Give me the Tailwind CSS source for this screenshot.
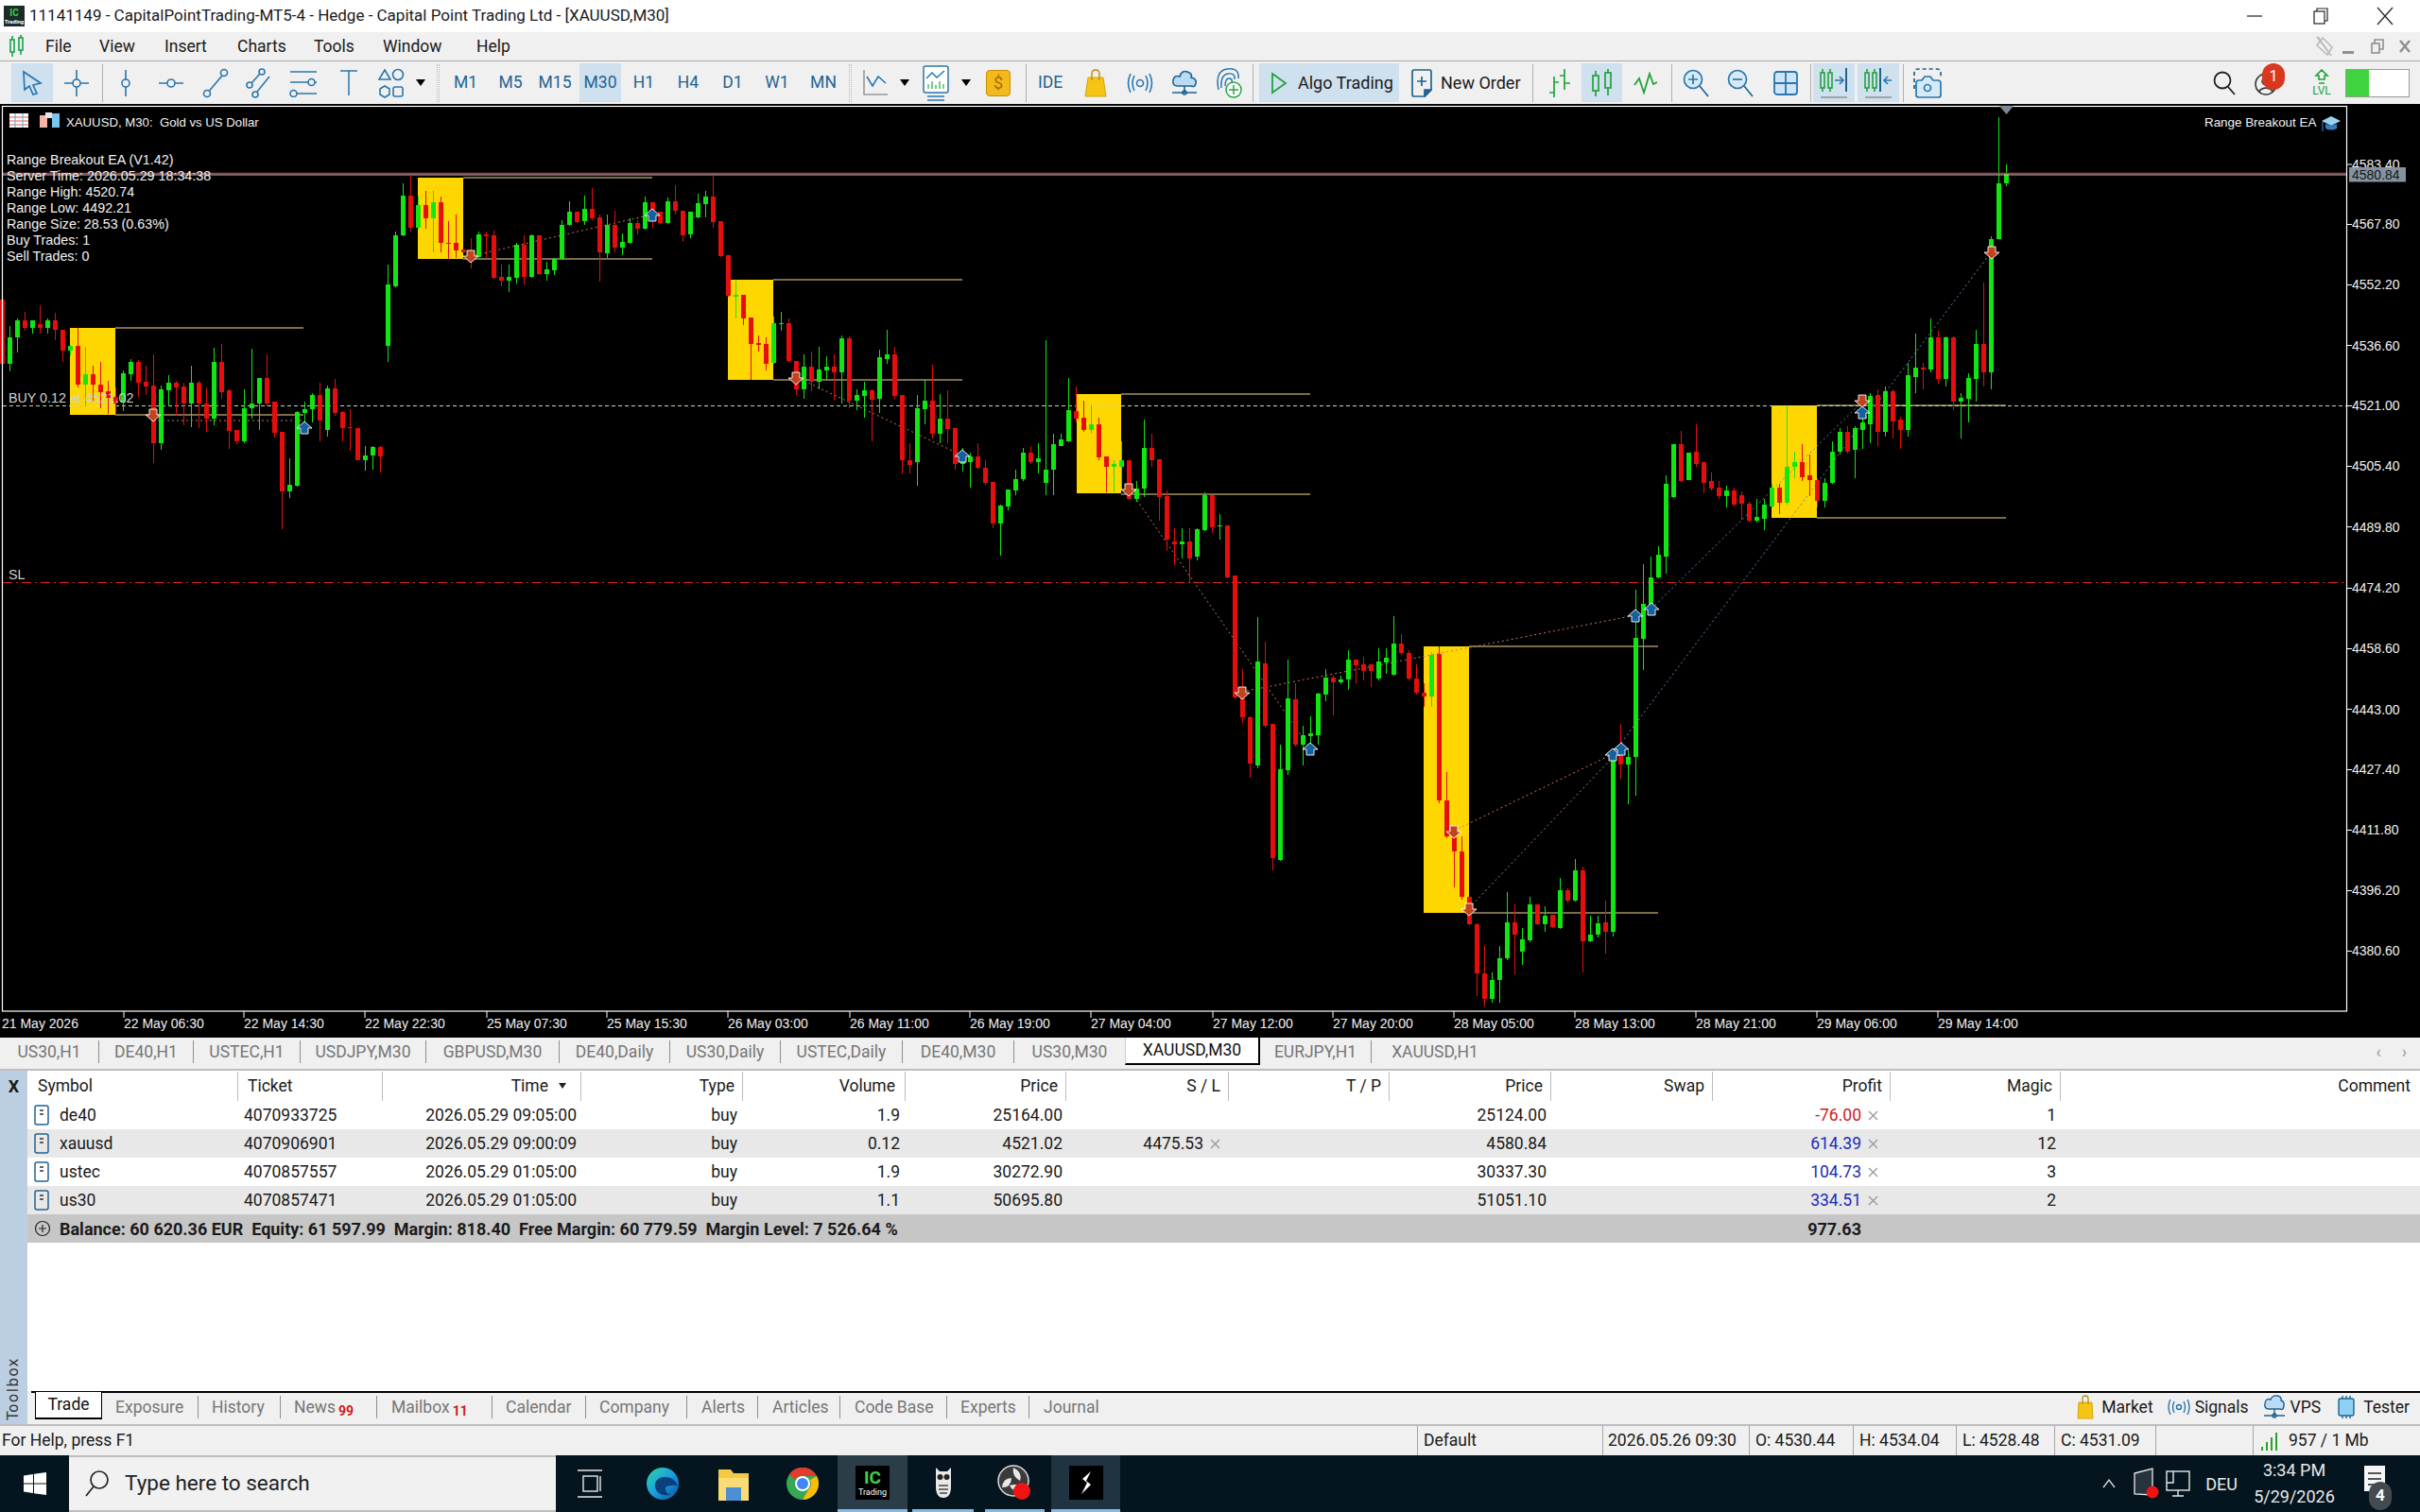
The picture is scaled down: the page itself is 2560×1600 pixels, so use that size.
<!doctype html>
<html lang="en">
<head>
<meta charset="utf-8">
<title>MT5</title>
<script src="https://cdn.jsdelivr.net/npm/@tailwindcss/browser@4"></script>
</head>
<body class="m-0">
<div class="w-[2560px] h-[1600px] overflow-hidden flex flex-col bg-white font-['Roboto',sans-serif] text-[17.5px] text-[#1a1a1a]">

<!-- title bar -->
<div class="h-[34px] shrink-0 flex items-center bg-white">
  <div class="w-[22px] h-[22px] ml-[4px] mr-[5px] bg-[#1c2b26] flex flex-col items-center justify-center text-[#36d04a] text-[10px] font-bold leading-[11px]">IC<span class="text-white text-[6px] leading-[7px]">Trading</span></div>
  <span class="text-[17px]">11141149 - CapitalPointTrading-MT5-4 - Hedge - Capital Point Trading Ltd - [XAUUSD,M30]</span>
  <div class="ml-auto flex items-center">
    <svg class="w-[20px] h-[20px] mr-[50px]" viewBox="0 0 20 20" fill="none" stroke="#222" stroke-width="1.2"><path d="M2 10H18"/></svg>
    <svg class="w-[20px] h-[20px] mr-[48px]" viewBox="0 0 20 20" fill="none" stroke="#222" stroke-width="1.2"><rect x="3" y="5" width="11" height="13"/><path d="M6 5V2H17V15H14"/></svg>
    <svg class="w-[20px] h-[20px] mr-[27px]" viewBox="0 0 20 20" fill="none" stroke="#222" stroke-width="1.2"><path d="M2 1L18 19M18 1L2 19"/></svg>
  </div>
</div>

<!-- menu bar -->
<div class="h-[31px] shrink-0 flex items-center bg-[#f0f0f0] border-b border-[#a9a9a9]">
  <svg class="w-[18px] h-[26px] ml-[9px]" viewBox="0 0 18 26" fill="none" stroke="#16a34a" stroke-width="1.6"><rect x="2" y="6" width="4" height="13"/><path d="M4 2V6M4 19V24"/><rect x="11" y="4" width="4" height="13"/><path d="M13 1V4M13 17V22"/></svg>
  <div class="w-[57px] pl-[21px]">File</div>
  <div class="w-[69px] pl-[21px]">View</div>
  <div class="w-[77px] pl-[21px]">Insert</div>
  <div class="w-[81px] pl-[21px]">Charts</div>
  <div class="w-[73px] pl-[21px]">Tools</div>
  <div class="w-[99px] pl-[21px]">Window</div>
  <div class="pl-[21px]">Help</div>
  <div class="ml-auto flex items-center">
    <svg class="w-[22px] h-[26px] mr-[8px]" viewBox="0 0 22 26" fill="none" stroke="#b9b9b9" stroke-width="1.5"><path d="M4 3L18 23M9 4L3 12L14 22L19 14ZM3 3L18 23"/></svg>
    <div class="w-[12px] h-[3px] bg-[#8f8f8f] mt-[12px] mr-[18px]"></div>
    <svg class="w-[14px] h-[16px] mr-[16px]" viewBox="0 0 14 16" fill="none" stroke="#8f8f8f" stroke-width="1.6"><rect x="1" y="5" width="8" height="10"/><path d="M4 5V1H13V11H9"/></svg>
    <svg class="w-[12px] h-[14px] mr-[10px]" viewBox="0 0 12 14" fill="none" stroke="#8f8f8f" stroke-width="2.4"><path d="M1 1L11 13M11 1L1 13"/></svg>
  </div>
</div>

<!-- toolbar -->
<div class="h-[45px] shrink-0 flex items-center bg-[#f0f0f0] text-[#1f6391] text-[17.5px] pl-[12px]">
  <div class="w-[44px] h-[41px] bg-[#cfe0ef] flex items-center justify-center"><svg class="w-[24px] h-[28px]" viewBox="0 0 24 28" fill="none" stroke="#2a76ad" stroke-width="1.7"><path d="M3 2L21 14L13 16L17 25L13 26L9 17L4 21Z"/></svg></div>
  <div class="w-[50px] flex justify-center"><svg class="w-[28px] h-[30px]" viewBox="0 0 28 30" fill="none" stroke="#2a76ad" stroke-width="1.6"><path d="M14 1V11M14 19V29M1 15H10M18 15H27"/><circle cx="14" cy="15" r="4"/></svg></div>
  <div class="w-[4px] h-[40px] flex justify-center"><div class="w-px h-full bg-[#b0b0b0]"></div></div>
  <div class="w-[46px] flex justify-center"><svg class="w-[16px] h-[30px]" viewBox="0 0 16 30" fill="none" stroke="#2a76ad" stroke-width="1.6"><path d="M8 1V11M8 19V29"/><circle cx="8" cy="15" r="4"/></svg></div>
  <div class="w-[50px] flex justify-center"><svg class="w-[28px] h-[14px]" viewBox="0 0 28 14" fill="none" stroke="#2a76ad" stroke-width="1.6"><path d="M1 7H10M18 7H27"/><circle cx="14" cy="7" r="4"/></svg></div>
  <div class="w-[44px] flex justify-center"><svg class="w-[30px] h-[32px]" viewBox="0 0 30 32" fill="none" stroke="#2a76ad" stroke-width="1.6"><circle cx="6" cy="27" r="3.5"/><circle cx="24" cy="5" r="3.5"/><path d="M8.5 24L22 8"/></svg></div>
  <div class="w-[48px] flex justify-center"><svg class="w-[30px] h-[32px]" viewBox="0 0 30 32" fill="none" stroke="#2a76ad" stroke-width="1.6"><circle cx="5" cy="18" r="3"/><circle cx="18" cy="4" r="3"/><path d="M7 16L16 6"/><circle cx="11" cy="28" r="3"/><path d="M13 25L26 9"/></svg></div>
  <div class="w-[46px] flex justify-center"><svg class="w-[30px] h-[30px]" viewBox="0 0 30 30" fill="none" stroke="#2a76ad" stroke-width="1.6"><path d="M1 3H29M1 14H20M27 14H29M8 26H29"/><circle cx="23.5" cy="14" r="3.5"/><circle cx="4.5" cy="26" r="3.5"/></svg></div>
  <div class="w-[50px] flex justify-center"><svg class="w-[20px] h-[30px]" viewBox="0 0 20 30" fill="none" stroke="#2a76ad" stroke-width="1.5"><path d="M1 2H19M10 2V28"/></svg></div>
  <div class="w-[40px] flex justify-center"><svg class="w-[28px] h-[32px]" viewBox="0 0 28 32" fill="none" stroke="#2a76ad" stroke-width="1.6"><path d="M7 2L13 12H1Z"/><circle cx="21" cy="7" r="5.5"/><path d="M7 19L12 22V28L7 31L2 28V22Z"/><rect x="16" y="20" width="10" height="10" rx="2"/></svg></div>
  <div class="w-[22px] flex justify-center"><div class="w-0 h-0 border-x-[5px] border-x-transparent border-t-[7px] border-t-black"></div></div>
  <div class="w-[14px] h-[40px] flex justify-center"><div class="w-[3px] h-full border-x border-dotted border-[#bbb]"></div></div>
  <div class="w-[45px] text-center">M1</div>
  <div class="w-[50px] text-center">M5</div>
  <div class="w-[44px] text-center">M15</div>
  <div class="w-[4px]"></div>
  <div class="w-[44px] h-[41px] bg-[#cfe0ef] flex items-center justify-center">M30</div>
  <div class="w-[48px] text-center">H1</div>
  <div class="w-[46px] text-center">H4</div>
  <div class="w-[48px] text-center">D1</div>
  <div class="w-[46px] text-center">W1</div>
  <div class="w-[52px] text-center">MN</div>
  <div class="w-[5px] h-[40px] flex justify-center"><div class="w-[3px] h-full border-x border-dotted border-[#bbb]"></div></div>
  <div class="w-[48px] flex justify-center"><svg class="w-[28px] h-[30px]" viewBox="0 0 28 30" fill="none" stroke="#2a76ad" stroke-width="1.6"><path d="M2 1V27H27" stroke="#9a9a9a"/><path d="M5 8L11 18L17 8L25 15"/></svg></div>
  <div class="w-[14px] flex justify-center"><div class="w-0 h-0 border-x-[5px] border-x-transparent border-t-[7px] border-t-black"></div></div>
  <div class="w-[51px] flex justify-center"><svg class="w-[30px] h-[38px]" viewBox="0 0 30 38" fill="none" stroke="#2a76ad" stroke-width="1.5"><rect x="2" y="1" width="26" height="28" rx="2" fill="#fff"/><path d="M5 14L11 8L16 13L24 6" stroke="#2a76ad"/><path d="M7 25V20M11 25V17M15 25V21M19 25V17M23 25V20" stroke="#27a745" stroke-width="1.2"/><path d="M6 33H24M6 37H24"/></svg></div>
  <div class="w-[14px] flex justify-center"><div class="w-0 h-0 border-x-[5px] border-x-transparent border-t-[7px] border-t-black"></div></div>
  <div class="w-[54px] flex justify-center"><div class="w-[26px] h-[28px] rounded-[4px] bg-[#f4b91a] border border-[#c98f05] flex items-center justify-center text-[#a8700a] text-[18px]">$</div></div>
  <div class="w-[4px] h-[40px] flex justify-center"><div class="w-px h-full bg-[#b0b0b0]"></div></div>
  <div class="w-[48px] text-center">IDE</div>
  <div class="w-[48px] flex justify-center"><svg class="w-[24px] h-[30px]" viewBox="0 0 24 30"><path d="M4 9H20L23 29H1Z" fill="#f6c514" stroke="#d8a40a"/><path d="M8 12V5Q8 1 12 1T16 5V12" fill="none" stroke="#b98d0c" stroke-width="1.4"/></svg></div>
  <div class="w-[46px] flex justify-center"><svg class="w-[28px] h-[24px]" viewBox="0 0 28 24" fill="none" stroke="#2a76ad" stroke-width="1.6"><circle cx="14" cy="12" r="3.5"/><path d="M8 4Q4 12 8 20M20 4Q24 12 20 20M4 2Q-1 12 4 22M24 2Q29 12 24 22"/></svg></div>
  <div class="w-[48px] flex justify-center"><svg class="w-[28px] h-[30px]" viewBox="0 0 28 30" fill="none" stroke="#1f6391" stroke-width="1.6"><path d="M7 18Q1 18 2 12T9 8Q11 1 17 3T21 9Q27 10 26 15T21 18Z" fill="#b8dcf5"/><path d="M14 18V25M1 25H27" /><circle cx="14" cy="25" r="2"/></svg></div>
  <div class="w-[46px] flex justify-center"><svg class="w-[28px] h-[34px]" viewBox="0 0 28 34" fill="none" stroke="#2a76ad" stroke-width="1.5"><path d="M3 24Q-1 4 12 2T24 12M6 22Q5 8 13 7T20 13M10 20Q10 12 14 12T17 16"/><circle cx="19" cy="24" r="8" fill="#fff" stroke="#27a745"/><path d="M19 19V29M14 24H24" stroke="#27a745"/></svg></div>
  <div class="w-[4px] h-[40px] flex justify-center"><div class="w-px h-full bg-[#b0b0b0]"></div></div>
  <div class="w-[5px]"></div>
  <div class="w-[148px] h-[41px] bg-[#cfe0ef] flex items-center text-[#1a1a1a] text-[18px] whitespace-nowrap"><svg class="w-[18px] h-[24px] ml-[12px] mr-[11px]" viewBox="0 0 18 24" fill="none" stroke="#22a23c" stroke-width="1.8"><path d="M2 2L16 12L2 22Z"/></svg>Algo Trading</div>
  <div class="w-[138px] flex items-center text-[#1a1a1a] text-[18px] whitespace-nowrap"><svg class="w-[22px] h-[30px] ml-[13px] mr-[9px]" viewBox="0 0 22 30" fill="none" stroke="#1f6391" stroke-width="1.7"><path d="M3 1H19Q21 1 21 3V22L14 29H3Q1 29 1 27V3Q1 1 3 1Z"/><path d="M11 8V18M6 13H16"/><path d="M14 29V22H21Z" fill="#1f6391"/></svg>New Order</div>
  <div class="w-[6px] h-[40px] flex justify-center"><div class="w-px h-full bg-[#b0b0b0]"></div></div>
  <div class="w-[49px] flex justify-center"><svg class="w-[26px] h-[32px]" viewBox="0 0 26 32" fill="none" stroke="#22a23c" stroke-width="1.7"><path d="M8 9V31M3 26H8M8 15H13M19 1V23M14 8H19M19 16H25"/></svg></div>
  <div class="w-[43px] h-[41px] bg-[#cfe0ef] flex items-center justify-center"><svg class="w-[24px] h-[32px]" viewBox="0 0 24 32" fill="none" stroke="#22a23c" stroke-width="1.7"><rect x="2" y="8" width="6" height="16"/><path d="M5 3V8M5 24V30"/><rect x="15" y="5" width="6" height="16"/><path d="M18 1V5M18 21V29"/></svg></div>
  <div class="w-[50px] flex justify-center"><svg class="w-[26px] h-[24px]" viewBox="0 0 26 24" fill="none" stroke="#22a23c" stroke-width="1.8"><path d="M1 14L6 7L11 22L17 2L21 13L25 11"/></svg></div>
  <div class="w-[4px] h-[40px] flex justify-center"><div class="w-px h-full bg-[#b0b0b0]"></div></div>
  <div class="w-[48px] flex justify-center"><svg class="w-[28px] h-[30px]" viewBox="0 0 28 30" fill="none" stroke="#2a76ad" stroke-width="1.7"><circle cx="11" cy="11" r="9.5" fill="#d6e9f7"/><path d="M11 6V16M6 11H16"/><path d="M18 18L27 29" stroke="#1f6391"/></svg></div>
  <div class="w-[46px] flex justify-center"><svg class="w-[28px] h-[30px]" viewBox="0 0 28 30" fill="none" stroke="#2a76ad" stroke-width="1.7"><circle cx="11" cy="11" r="9.5" fill="#d6e9f7"/><path d="M6 11H16"/><path d="M18 18L27 29" stroke="#1f6391"/></svg></div>
  <div class="w-[49px] flex justify-center"><svg class="w-[26px] h-[26px]" viewBox="0 0 26 26" fill="#cfe4f6" stroke="#2a76ad" stroke-width="1.8"><rect x="1" y="1" width="24" height="24" rx="3"/><path d="M13 1V25M1 13H25"/></svg></div>
  <div class="w-[4px] h-[40px] flex justify-center"><div class="w-px h-full bg-[#b0b0b0]"></div></div>
  <div class="w-[1px]"></div>
  <div class="w-[44px] h-[41px] bg-[#cfe0ef] flex items-center justify-center"><svg class="w-[30px] h-[34px]" viewBox="0 0 30 34" fill="none" stroke-width="1.6"><g stroke="#22a23c"><rect x="1" y="6" width="4" height="16"/><path d="M3 2V6M3 22V26"/><rect x="9" y="6" width="4" height="16"/><path d="M11 2V6M11 22V26"/></g><path d="M16 14H24M21 10L25 14L21 18" stroke="#2a76ad"/><path d="M28 1V26" stroke="#1f6391" stroke-width="2"/><path d="M1 32H29" stroke="#a3a3a3" stroke-width="2"/></svg></div>
  <div class="w-[3px]"></div>
  <div class="w-[44px] h-[41px] bg-[#cfe0ef] flex items-center justify-center"><svg class="w-[30px] h-[34px]" viewBox="0 0 30 34" fill="none" stroke-width="1.6"><g stroke="#22a23c"><rect x="1" y="6" width="4" height="16"/><path d="M3 2V6M3 22V26"/><rect x="9" y="6" width="4" height="16"/><path d="M11 2V6M11 22V26"/></g><path d="M17 1V26" stroke="#1f6391" stroke-width="2"/><path d="M29 14H21M25 10L21 14L25 18" stroke="#2a76ad"/><path d="M1 32H29" stroke="#a3a3a3" stroke-width="2"/></svg></div>
  <div class="w-[4px] h-[40px] flex justify-center ml-[2px]"><div class="w-px h-full bg-[#b0b0b0]"></div></div>
  <div class="w-[48px] flex justify-center"><svg class="w-[30px] h-[32px]" viewBox="0 0 30 32" fill="none" stroke="#2a76ad" stroke-width="1.7"><path d="M1 22V5Q1 1 5 1H25Q29 1 29 5V9" stroke-dasharray="4 3" stroke="#1f6391"/><path d="M9 13L12 9H18L21 13H26Q29 13 29 16V29Q29 31 26 31H6Q3 31 3 29V16Q3 13 6 13Z" fill="#d6e9f7"/><circle cx="15" cy="21" r="3.5"/></svg></div>
  <div class="flex-1"></div>
  <svg class="w-[24px] h-[26px] mr-[20px]" viewBox="0 0 24 26" fill="none" stroke="#222" stroke-width="1.8"><circle cx="10" cy="10" r="8.5"/><path d="M16 17L23 25"/></svg>
  <div class="relative w-[26px] h-[26px] mr-[34px]">
    <svg class="w-[26px] h-[28px]" viewBox="0 0 26 28" fill="none" stroke="#333" stroke-width="1.5"><circle cx="12" cy="14" r="11"/><circle cx="12" cy="11" r="4"/><path d="M4 22Q12 14 20 22"/></svg>
    <div class="absolute -top-[8px] left-[8px] w-[24px] h-[28px] rounded-full bg-[#d8381e] text-white text-[16px] flex items-center justify-center">1</div>
  </div>
  <div class="flex flex-col items-center w-[22px] mr-[14px] text-[#22a23c] text-[12px] leading-[13px]">
    <svg class="w-[16px] h-[17px]" viewBox="0 0 16 17" fill="none" stroke="#22a23c" stroke-width="1.6"><path d="M8 1L2 7H5V11H11V7H14ZM5 15H11"/></svg>LVL
  </div>
  <div class="w-[68px] h-[30px] bg-white border border-[#9a9a9a] mr-[11px]"><div class="w-[24px] h-full bg-[#3fd43f]"></div></div>
</div>

<!-- chart -->
<div class="h-[988px] shrink-0 bg-black">
<svg class="block w-[2560px] h-[988px]" viewBox="0 110 2560 988">
  <!-- range boxes -->
  <g fill="#ffd700">
    <rect x="74" y="347" width="48" height="92"/>
    <rect x="442" y="188" width="48" height="86"/>
    <rect x="770" y="296" width="48" height="106"/>
    <rect x="1139" y="417" width="47" height="105"/>
    <rect x="1506" y="684" width="48" height="282"/>
    <rect x="1874" y="429" width="48" height="119"/>
  </g>
  <path fill="none" stroke="#f5d98f" stroke-width="1.2" d="M122 347H321M122 439H321M490 188H690M490 274H690M818 296H1018M818 402H1018M1186 417H1386M1186 523H1386M1554 684H1754M1554 966H1754M1922 429H2122M1922 548H2122"/>
  <!-- order lines -->
  <path stroke="#b9e0a8" stroke-width="1" stroke-dasharray="4 3" d="M3 429.5H2483"/>
  <path stroke="#e02020" stroke-width="1.2" stroke-dasharray="10 4 2 4" d="M3 616.5H2483"/>
  <!-- trade lines -->
  <g fill="none" stroke-width="1" stroke-dasharray="2 3">
    <g stroke="#c9785a">
      <path d="M162 445H322M498 271L690 227M842 399L1018 482M1194 517L1386 792M1314 732L1730 651M1538 879L1706 798M1554 961L1715 792"/>
    </g>
    <g stroke="#5a86c0"><path d="M1747 644L1970 425M1706 798L2107 266"/></g>
  </g>
  <!-- wicks & bodies -->
  <g fill="none" shape-rendering="crispEdges">
    <path stroke="#12e612" stroke-width="1" d="M10 345V393M18 337V373M34 339V353M50 337V353M74 365V377M90 367V430M130 392V435M138 380V403M170 408V476M178 397V430M202 387V452M226 368V450M258 412V469M266 369V443M274 400V455M306 485V527M314 435V515M322 425V447M330 416V447M346 408V462M386 472V498M394 472V497M410 280V383M418 245V304M426 194V250M442 207V243M458 202V267M506 245V273M538 280V309M546 257V300M562 248V294M578 277V297M586 273V291M594 233V275M602 213V239M618 207V238M642 227V273M658 247V270M666 231V258M682 208V243M706 209V237M730 224V252M738 205V231M746 202V230M778 297V337M818 335V385M826 330V350M850 375V422M866 367V412M874 377V402M890 355V427M906 412V434M914 404V442M930 370V437M938 349V385M970 418V514M978 402V449M994 417V469M1018 474V499M1026 479V516M1058 534V588M1066 518V540M1074 497V524M1082 474V509M1098 469V501M1106 360V524M1114 459V524M1122 459V472M1130 400V468M1154 429V459M1178 487V521M1186 467V519M1202 509V531M1210 444V526M1250 559V591M1266 559V593M1274 521V562M1290 544V571M1330 653V813M1354 788V911M1362 698V820M1378 768V810M1386 758V797M1394 733V788M1402 708V742M1418 715V724M1426 688V730M1458 686V720M1466 686V713M1474 652V715M1514 690V748M1578 1029V1061M1586 1001V1061M1594 944V1016M1610 982V1021M1618 949V997M1634 959V986M1650 929V983M1666 909V954M1682 969V997M1690 969V992M1706 794V991M1722 794V851M1730 624V842M1738 597V709M1746 589V644M1754 578V612M1762 503V607M1770 470V527M1786 479V508M1826 514V537M1858 528V553M1866 528V561M1874 512V537M1890 430V534M1898 478V506M1930 506V537M1938 467V512M1946 453V481M1962 451V506M1970 425V475M1978 416V469M1994 409V462M2018 384V462M2026 353V416M2042 337V394M2058 356V409M2074 416V464M2082 395V447M2090 349V425M2106 250V412M2114 124V253M2122 174V197"/>
    <path stroke="#12e612" stroke-width="5" d="M10 357V385M18 339V357M34 339V347M50 339V347M74 366V371M90 396V407M130 395V426M138 383V396M170 412V469M178 405V413M202 405V427M226 383V443M258 432V467M266 427V432M274 400V427M306 513V520M314 436V514M322 433V437M330 418V433M346 411V455M386 482V487M394 473V482M410 301V366M418 249V303M426 207V249M442 217V241M458 214V231M506 248V272M538 293V297M546 259V294M562 249V293M578 285V290M586 274V286M594 238V274M602 224V238M618 221V234M642 238V268M658 256V262M666 236V257M682 214V242M706 213V236M730 224V248M738 215V230M746 208V216M778 312V314M818 342V384M826 342V343M850 388V412M866 391V404M874 388V392M890 358V394M906 418V424M914 413V419M930 378V422M938 375V380M970 432V489M978 424V433M994 443V459M1018 488V491M1026 483V489M1058 535V554M1066 518V536M1074 507V519M1082 479V507M1098 485V489M1106 497V511M1114 470V497M1122 465V472M1130 434V467M1154 449V455M1178 491V494M1186 487V494M1202 517V528M1210 474V517M1250 573V576M1266 560V589M1274 524V561M1290 556V557M1330 700V810M1354 814V910M1362 739V815M1378 778V788M1386 776V779M1394 734V778M1402 717V735M1418 719V722M1426 698V719M1458 700V718M1466 696V701M1474 681V714M1514 693V737M1578 1037V1057M1586 1014V1037M1594 976V1014M1610 994V1007M1618 957V995M1634 969V978M1650 942V982M1666 921V953M1682 989V996M1690 977V989M1706 800V986M1722 801V809M1730 675V801M1738 639V676M1746 611V641M1754 587V611M1762 512V589M1770 470V526M1786 479V508M1826 519V525M1858 547V551M1866 534V549M1874 516V536M1890 494V532M1898 489V494M1930 511V530M1938 478V511M1946 457V478M1962 453V476M1970 447V455M1978 419V449M1994 414V457M2018 397V455M2026 389V399M2042 357V391M2058 357V401M2074 421V425M2082 400V422M2090 364V401M2106 253V394M2114 194V253M2122 184V194"/>
    <path stroke="#e60d0d" stroke-width="1" d="M26 330V350M42 323V353M58 331V360M66 349V383M82 347V410M98 387V425M106 383V432M114 403V438M122 410V438M146 381V420M154 387V418M162 375V490M186 403V440M194 405V450M210 403V453M218 410V457M234 364V422M242 412V475M250 455V470M282 375V430M290 425V463M298 457V560M338 405V467M354 401V440M362 435V467M370 433V477M378 453V487M402 472V500M434 186V245M450 202V242M466 208V267M474 234V274M482 227V273M490 264V267M498 252V284M514 245V273M522 244V295M530 280V303M554 249V301M570 249V291M610 224V236M626 199V233M634 227V298M650 223V267M674 233V248M690 214V241M698 224V237M714 196V227M722 223V256M754 186V241M762 234V272M770 270V314M786 312V344M794 336V402M802 355V372M810 357V392M834 337V384M842 382V418M858 372V414M882 375V424M898 356V432M922 412V467M946 367V422M954 418V501M962 469V501M986 386V464M1002 413V469M1010 453V497M1034 469V497M1042 487V513M1050 510V559M1090 472V491M1138 409V447M1146 424V457M1162 442V487M1170 483V521M1194 487V529M1218 459V494M1226 486V551M1234 519V583M1242 559V598M1258 559V616M1282 524V564M1298 556V612M1306 609V740M1314 708V765M1322 758V823M1338 679V770M1346 766V921M1370 723V790M1410 715V757M1434 698V723M1442 695V720M1450 703V727M1482 671V693M1490 688V720M1498 703V735M1506 723V748M1522 684V850M1530 817V887M1538 882V939M1546 885V952M1554 949V979M1562 977V1054M1570 1001V1065M1602 957V1031M1626 957V979M1642 968V982M1658 940V955M1674 917V1029M1698 953V1009M1714 766V824M1778 456V510M1794 449V494M1802 489V522M1810 500V519M1818 509V528M1834 516V536M1842 520V550M1850 531V553M1882 512V544M1906 470V509M1914 481V525M1922 506V537M1954 451V480M1986 412V472M2002 412V464M2010 441V475M2034 384V412M2050 350V406M2066 356V434M2098 299V409"/>
    <path stroke="#e60d0d" stroke-width="5" d="M2 317V385M26 339V347M42 343V347M58 339V349M66 349V371M82 366V407M98 396V407M106 407V415M114 414V421M122 420V427M146 383V405M154 404V409M162 408V469M186 405V410M194 409V427M210 405V427M218 427V443M234 383V415M242 413V456M250 455V467M282 400V427M290 425V458M298 457V520M338 418V445M354 411V437M362 436V453M370 452V453M378 453V487M402 473V483M434 207V241M450 217V231M466 214V257M474 257V258M482 257V265M490 264V267M498 267V273M514 248V250M522 249V294M530 293V297M554 259V293M570 249V290M610 224V235M626 221V231M634 230V267M650 238V262M674 236V242M690 214V223M698 224V236M714 213V223M722 223V249M754 208V235M762 234V271M770 270V313M786 312V337M794 336V364M802 363V365M810 364V385M834 342V382M842 382V412M858 388V404M882 388V394M898 358V424M922 413V423M946 375V419M954 418V487M962 487V492M986 424V459M1002 443V454M1010 453V491M1034 483V495M1042 495V511M1050 510V554M1090 479V489M1138 435V443M1146 442V455M1162 449V484M1170 483V494M1194 487V528M1218 474V487M1226 486V526M1234 525V571M1242 573V576M1258 573V591M1282 524V558M1298 556V611M1306 609V738M1314 739V759M1322 759V808M1338 702V768M1346 766V908M1370 740V788M1410 717V722M1434 698V704M1442 703V710M1450 703V710M1482 681V691M1490 691V718M1498 718V733M1506 733V737M1522 692V847M1530 847V885M1538 886V901M1546 901V949M1554 949V978M1562 978V1030M1570 1030V1057M1602 976V989M1626 957V978M1642 968V981M1658 942V953M1674 921V996M1698 976V986M1714 799V809M1778 470V509M1794 478V491M1802 489V511M1810 509V517M1818 516V525M1834 519V534M1842 524V533M1850 533V551M1882 516V532M1906 489V505M1914 503V508M1922 508V530M1954 457V478M1986 418V457M2002 414V446M2010 444V455M2034 389V391M2050 357V401M2066 357V425M2098 364V394"/>
  </g>
  <!-- bid line and frame -->
  <path stroke="#b33a3a" stroke-width="1.5" d="M3 183.5H2483"/>
  <path stroke="#cdbcbc" stroke-width="1" d="M3 185H2483"/>
  <rect x="2.5" y="112.5" width="2480" height="957.5" fill="none" stroke="#fff" stroke-width="1.2"/>
  <path d="M2115 112H2130L2122.5 121Z" fill="#7d8a95"/>
  <!-- trade arrows -->
  <g stroke="#fff" stroke-width="0.9" fill="#c4431f">
    <path d="M158 433H166V439H170L162 446L154 439H158Z"/>
    <path d="M494 265H502V271H506L498 278L490 271H494Z"/>
    <path d="M838 394H846V400H850L842 407L834 400H838Z"/>
    <path d="M1190 512H1198V518H1202L1194 525L1186 518H1190Z"/>
    <path d="M1310 727H1318V733H1322L1314 740L1306 733H1310Z"/>
    <path d="M1534 874H1542V880H1546L1538 887L1530 880H1534Z"/>
    <path d="M1550 956H1558V962H1562L1554 969L1546 962H1550Z"/>
    <path d="M1966 418H1974V424H1978L1970 431L1962 424H1966Z"/>
    <path d="M2103 261H2111V267H2115L2107 274L2099 267H2103Z"/>
  </g>
  <g stroke="#fff" stroke-width="0.9" fill="#15609f">
    <path d="M322 446L330 453H326V459H318V453H314Z"/>
    <path d="M690 221L698 228H694V234H686V228H682Z"/>
    <path d="M1018 476L1026 483H1022V489H1014V483H1010Z"/>
    <path d="M1386 786L1394 793H1390V799H1382V793H1378Z"/>
    <path d="M1730 645L1738 652H1734V658H1726V652H1722Z"/>
    <path d="M1747 638L1755 645H1751V651H1743V645H1739Z"/>
    <path d="M1706 792L1714 799H1710V805H1702V799H1698Z"/>
    <path d="M1715 786L1723 793H1719V799H1711V793H1707Z"/>
    <path d="M1970 430L1978 437H1974V443H1966V437H1962Z"/>
  </g>
  <!-- chart icons -->
  <g fill="none" stroke-width="1">
    <rect x="10" y="120" width="20" height="15" fill="#fff"/>
    <path d="M10 124H30M10 128H30M10 132H30" stroke="#e65b4a"/>
    <path d="M16 120V135M24 120V135" stroke="#5aa4d8"/>
    <rect x="42" y="122" width="8" height="13" fill="#f6b4a8"/>
    <rect x="55" y="120" width="8" height="15" fill="#7cc4f0"/>
    <rect x="48" y="119" width="7" height="6" fill="#e6e6e6"/>
  </g>
  <path d="M2466 123L2476 128L2466 133L2456 128Z" fill="#9ad2f5"/>
  <path d="M2460 131V136Q2466 139 2472 136V131L2466 133Z" fill="#2f7fc0"/>
  <path d="M2457 129V139" stroke="#2f7fc0" stroke-width="1.2"/>
  <!-- texts -->
  <g font-family="'Liberation Sans',sans-serif" font-size="14.3" fill="#f2f2f2">
    <text x="70" y="134" font-size="13.2" xml:space="preserve">XAUUSD, M30:  Gold vs US Dollar</text>
    <text x="2332" y="134" font-size="13.4">Range Breakout EA</text>
    <text x="7" y="174">Range Breakout EA (V1.42)</text>
    <text x="7" y="191">Server Time: 2026.05.29 18:34:38</text>
    <text x="7" y="208">Range High: 4520.74</text>
    <text x="7" y="225">Range Low: 4492.21</text>
    <text x="7" y="242">Range Size: 28.53 (0.63%)</text>
    <text x="7" y="259">Buy Trades: 1</text>
    <text x="7" y="276">Sell Trades: 0</text>
    <text x="9" y="426" fill="#d0d0d0">BUY 0.12 at 4521.02</text>
    <text x="9" y="613" fill="#d0d0d0">SL</text>
  </g>
  <!-- price axis -->
  <path stroke="#fff" stroke-width="1" d="M2483 174H2488M2483 237.5H2488M2483 301.5H2488M2483 365.5H2488M2483 429.5H2488M2483 493.5H2488M2483 557.5H2488M2483 622.5H2488M2483 686.5H2488M2483 750.5H2488M2483 814.5H2488M2483 878.5H2488M2483 942.5H2488M2483 1006.5H2488M131 1070V1077M258 1070V1077M386 1070V1077M515 1070V1077M642 1070V1077M770 1070V1077M899 1070V1077M1026 1070V1077M1154 1070V1077M1283 1070V1077M1410 1070V1077M1538 1070V1077M1666 1070V1077M1794 1070V1077M1922 1070V1077M2050 1070V1077"/>
  <g font-family="'Liberation Sans',sans-serif" font-size="14" fill="#f2f2f2">
    <text x="2488" y="179">4583.40</text>
    <text x="2488" y="242">4567.80</text>
    <text x="2488" y="306">4552.20</text>
    <text x="2488" y="371">4536.60</text>
    <text x="2488" y="434">4521.00</text>
    <text x="2488" y="498">4505.40</text>
    <text x="2488" y="563">4489.80</text>
    <text x="2488" y="627">4474.20</text>
    <text x="2488" y="691">4458.60</text>
    <text x="2488" y="756">4443.00</text>
    <text x="2488" y="819">4427.40</text>
    <text x="2488" y="883">4411.80</text>
    <text x="2488" y="947">4396.20</text>
    <text x="2488" y="1011">4380.60</text>
    <text x="2" y="1088">21 May 2026</text>
    <text x="131" y="1088">22 May 06:30</text>
    <text x="258" y="1088">22 May 14:30</text>
    <text x="386" y="1088">22 May 22:30</text>
    <text x="515" y="1088">25 May 07:30</text>
    <text x="642" y="1088">25 May 15:30</text>
    <text x="770" y="1088">26 May 03:00</text>
    <text x="899" y="1088">26 May 11:00</text>
    <text x="1026" y="1088">26 May 19:00</text>
    <text x="1154" y="1088">27 May 04:00</text>
    <text x="1283" y="1088">27 May 12:00</text>
    <text x="1410" y="1088">27 May 20:00</text>
    <text x="1538" y="1088">28 May 05:00</text>
    <text x="1666" y="1088">28 May 13:00</text>
    <text x="1794" y="1088">28 May 21:00</text>
    <text x="1922" y="1088">29 May 06:00</text>
    <text x="2050" y="1088">29 May 14:00</text>
  </g>
  <rect x="2485" y="177" width="60" height="15.5" fill="#8593a1"/>
  <text x="2488" y="190" font-family="'Liberation Sans',sans-serif" font-size="14" fill="#161616">4580.84</text>
</svg>
</div>

<!-- chart tabs -->
<div class="h-[35px] shrink-0 flex items-start bg-[#f0f0f0] border-b-2 border-[#bdbdbd] text-[#767676] relative">
  <div class="w-[105px] h-[24px] mt-[3px] border-r border-[#8f8f8f] flex items-center justify-center">US30,H1</div>
  <div class="w-[100px] h-[24px] mt-[3px] border-r border-[#8f8f8f] flex items-center justify-center">DE40,H1</div>
  <div class="w-[113px] h-[24px] mt-[3px] border-r border-[#8f8f8f] flex items-center justify-center">USTEC,H1</div>
  <div class="w-[133px] h-[24px] mt-[3px] border-r border-[#8f8f8f] flex items-center justify-center">USDJPY,M30</div>
  <div class="w-[141px] h-[24px] mt-[3px] border-r border-[#8f8f8f] flex items-center justify-center">GBPUSD,M30</div>
  <div class="w-[117px] h-[24px] mt-[3px] border-r border-[#8f8f8f] flex items-center justify-center">DE40,Daily</div>
  <div class="w-[117px] h-[24px] mt-[3px] border-r border-[#8f8f8f] flex items-center justify-center">US30,Daily</div>
  <div class="w-[129px] h-[24px] mt-[3px] border-r border-[#8f8f8f] flex items-center justify-center">USTEC,Daily</div>
  <div class="w-[118px] h-[24px] mt-[3px] border-r border-[#8f8f8f] flex items-center justify-center">DE40,M30</div>
  <div class="w-[117px] h-[24px] mt-[3px]  flex items-center justify-center">US30,M30</div>
  <div class="w-[143px] h-[29px] bg-white border-l border-r-2 border-b-2 border-l-[#cfcfcf] border-r-black border-b-black flex items-center justify-center text-[#111]">XAUUSD,M30</div>
  <div class="w-[118px] h-[24px] mt-[3px] border-r border-[#8f8f8f] flex items-center justify-center">EURJPY,H1</div>
  <div class="w-[134px] h-[24px] mt-[3px] flex items-center justify-center">XAUUSD,H1</div>
  <div class="ml-auto mr-[14px] mt-[2px] flex gap-[22px] text-[#9a9a9a]"><span>‹</span><span>›</span></div>
</div>

<!-- toolbox -->
<div class="h-[374px] shrink-0 flex">
  <div class="w-[29px] shrink-0 bg-[#bccfe2] flex flex-col items-center">
    <div class="mt-[3px] font-bold text-[18px] text-[#1a1a1a]">X</div>
    <div class="mt-auto mb-[4px] [writing-mode:vertical-rl] rotate-180 text-[15px] tracking-[1.5px] font-['DejaVu_Sans',sans-serif] text-[#333]">Toolbox</div>
  </div>
  <div class="flex-1 flex flex-col min-w-0">
    <!-- header -->
    <div class="h-[32px] shrink-0 grid grid-cols-[223px_153px_210px_171px_172px_170px_172px_170px_171px_171px_188px_180px_380px] items-center bg-white">
      <div class="h-[31px] border-r border-[#bdbdbd] pl-[11px] leading-[31px]">Symbol</div>
      <div class="h-[31px] border-r border-[#bdbdbd] pl-[10px] leading-[31px]">Ticket</div>
      <div class="h-[31px] border-r border-[#bdbdbd] pr-[15px] flex items-center justify-end gap-[11px]">Time<span class="w-0 h-0 border-x-[4px] border-x-transparent border-t-[6px] border-t-[#222]"></span></div>
      <div class="h-[31px] border-r border-[#bdbdbd] pr-[8px] leading-[31px] text-right">Type</div>
      <div class="h-[31px] border-r border-[#bdbdbd] pr-[10px] leading-[31px] text-right">Volume</div>
      <div class="h-[31px] border-r border-[#bdbdbd] pr-[8px] leading-[31px] text-right">Price</div>
      <div class="h-[31px] border-r border-[#bdbdbd] pr-[8px] leading-[31px] text-right">S / L</div>
      <div class="h-[31px] border-r border-[#bdbdbd] pr-[8px] leading-[31px] text-right">T / P</div>
      <div class="h-[31px] border-r border-[#bdbdbd] pr-[8px] leading-[31px] text-right">Price</div>
      <div class="h-[31px] border-r border-[#bdbdbd] pr-[8px] leading-[31px] text-right">Swap</div>
      <div class="h-[31px] border-r border-[#bdbdbd] pr-[8px] leading-[31px] text-right">Profit</div>
      <div class="h-[31px] border-r border-[#bdbdbd] pr-[8px] leading-[31px] text-right">Magic</div>
      <div class="h-[31px] pr-[10px] leading-[31px] text-right">Comment</div>
    </div>
    <!-- rows -->
    <div class="h-[30px] shrink-0 grid grid-cols-[223px_153px_210px_171px_172px_170px_172px_170px_171px_171px_188px_180px_380px] items-center bg-white">
      <div class="flex items-center pl-[7px] gap-[11px]"><svg class="w-[16px] h-[22px]" viewBox="0 0 16 22" fill="none" stroke="#1f6391" stroke-width="1.5"><rect x="1" y="1" width="14" height="20" rx="2"/><path d="M6 6H10M6 10H10" stroke="#333"/></svg>de40</div>
      <div class="pl-[6px]">4070933725</div>
      <div class="pr-[5px] text-right">2026.05.29 09:05:00</div>
      <div class="pr-[6px] text-right">buy</div>
      <div class="pr-[6px] text-right">1.9</div>
      <div class="pr-[4px] text-right">25164.00</div>
      <div></div><div></div>
      <div class="pr-[5px] text-right">25124.00</div>
      <div></div>
      <div class="pr-[8px] flex items-center justify-end gap-[7px]"><span class="text-[#d01c1c]">-76.00</span><svg class="w-[11px] h-[11px] mr-[5px]" viewBox="0 0 11 11" stroke="#9a9a9a" stroke-width="1.4"><path d="M1 1L10 10M10 1L1 10"/></svg></div>
      <div class="pr-[5px] text-right">1</div>
      <div></div>
    </div>
    <div class="h-[30px] shrink-0 grid grid-cols-[223px_153px_210px_171px_172px_170px_172px_170px_171px_171px_188px_180px_380px] items-center bg-[#e8e8e8]">
      <div class="flex items-center pl-[7px] gap-[11px]"><svg class="w-[16px] h-[22px]" viewBox="0 0 16 22" fill="none" stroke="#1f6391" stroke-width="1.5"><rect x="1" y="1" width="14" height="20" rx="2"/><path d="M6 6H10M6 10H10" stroke="#333"/></svg>xauusd</div>
      <div class="pl-[6px]">4070906901</div>
      <div class="pr-[5px] text-right">2026.05.29 09:00:09</div>
      <div class="pr-[6px] text-right">buy</div>
      <div class="pr-[6px] text-right">0.12</div>
      <div class="pr-[4px] text-right">4521.02</div>
      <div class="flex items-center justify-end gap-[7px] pr-[9px]"><span>4475.53</span><svg class="w-[11px] h-[11px]" viewBox="0 0 11 11" stroke="#9a9a9a" stroke-width="1.4"><path d="M1 1L10 10M10 1L1 10"/></svg></div>
      <div></div>
      <div class="pr-[5px] text-right">4580.84</div>
      <div></div>
      <div class="pr-[8px] flex items-center justify-end gap-[7px]"><span class="text-[#1c2bb8]">614.39</span><svg class="w-[11px] h-[11px] mr-[5px]" viewBox="0 0 11 11" stroke="#9a9a9a" stroke-width="1.4"><path d="M1 1L10 10M10 1L1 10"/></svg></div>
      <div class="pr-[5px] text-right">12</div>
      <div></div>
    </div>
    <div class="h-[30px] shrink-0 grid grid-cols-[223px_153px_210px_171px_172px_170px_172px_170px_171px_171px_188px_180px_380px] items-center bg-white">
      <div class="flex items-center pl-[7px] gap-[11px]"><svg class="w-[16px] h-[22px]" viewBox="0 0 16 22" fill="none" stroke="#1f6391" stroke-width="1.5"><rect x="1" y="1" width="14" height="20" rx="2"/><path d="M6 6H10M6 10H10" stroke="#333"/></svg>ustec</div>
      <div class="pl-[6px]">4070857557</div>
      <div class="pr-[5px] text-right">2026.05.29 01:05:00</div>
      <div class="pr-[6px] text-right">buy</div>
      <div class="pr-[6px] text-right">1.9</div>
      <div class="pr-[4px] text-right">30272.90</div>
      <div></div><div></div>
      <div class="pr-[5px] text-right">30337.30</div>
      <div></div>
      <div class="pr-[8px] flex items-center justify-end gap-[7px]"><span class="text-[#1c2bb8]">104.73</span><svg class="w-[11px] h-[11px] mr-[5px]" viewBox="0 0 11 11" stroke="#9a9a9a" stroke-width="1.4"><path d="M1 1L10 10M10 1L1 10"/></svg></div>
      <div class="pr-[5px] text-right">3</div>
      <div></div>
    </div>
    <div class="h-[30px] shrink-0 grid grid-cols-[223px_153px_210px_171px_172px_170px_172px_170px_171px_171px_188px_180px_380px] items-center bg-[#e8e8e8]">
      <div class="flex items-center pl-[7px] gap-[11px]"><svg class="w-[16px] h-[22px]" viewBox="0 0 16 22" fill="none" stroke="#1f6391" stroke-width="1.5"><rect x="1" y="1" width="14" height="20" rx="2"/><path d="M6 6H10M6 10H10" stroke="#333"/></svg>us30</div>
      <div class="pl-[6px]">4070857471</div>
      <div class="pr-[5px] text-right">2026.05.29 01:05:00</div>
      <div class="pr-[6px] text-right">buy</div>
      <div class="pr-[6px] text-right">1.1</div>
      <div class="pr-[4px] text-right">50695.80</div>
      <div></div><div></div>
      <div class="pr-[5px] text-right">51051.10</div>
      <div></div>
      <div class="pr-[8px] flex items-center justify-end gap-[7px]"><span class="text-[#1c2bb8]">334.51</span><svg class="w-[11px] h-[11px] mr-[5px]" viewBox="0 0 11 11" stroke="#9a9a9a" stroke-width="1.4"><path d="M1 1L10 10M10 1L1 10"/></svg></div>
      <div class="pr-[5px] text-right">2</div>
      <div></div>
    </div>
    <!-- total -->
    <div class="h-[30px] shrink-0 flex items-center bg-[#c6c6c6] font-bold text-[18px] whitespace-nowrap">
      <svg class="w-[18px] h-[18px] ml-[7px] mr-[9px]" viewBox="0 0 18 18" fill="none" stroke="#222" stroke-width="1.2"><circle cx="9" cy="9" r="7.5"/><path d="M9 5V13M5 9H13"/></svg>
      <span>Balance: 60 620.36 EUR&nbsp;&nbsp;Equity: 61 597.99&nbsp;&nbsp;Margin: 818.40&nbsp;&nbsp;Free Margin: 60 779.59&nbsp;&nbsp;Margin Level: 7 526.64 %</span>
      <span class="ml-auto mr-[591px]">977.63</span>
    </div>
    <div class="flex-1 bg-white"></div>
    <!-- toolbox tabs -->
    <div class="h-[35px] shrink-0 bg-[#f0f0f0] pl-[4px]">
      <div class="h-full border-t-2 border-black flex items-start pl-[4px] text-[#767676]">
        <div class="w-[71px] h-[29px] -mt-[1px] bg-white border-x border-b-2 border-black flex items-center justify-center text-[#111]">Trade</div>
        <div class="w-[102px] h-[24px] mt-[3px] pl-[14px] border-r border-[#8f8f8f] leading-[24px]">Exposure</div>
        <div class="w-[87px] h-[24px] mt-[3px] pl-[14px] border-r border-[#8f8f8f] leading-[24px]">History</div>
        <div class="w-[102px] h-[24px] mt-[3px] pl-[14px] border-r border-[#8f8f8f] leading-[24px]">News<span class="text-[#d01c1c] text-[14px] font-bold ml-[3px] relative top-[3px]">99</span></div>
        <div class="w-[122px] h-[24px] mt-[3px] pl-[15px] border-r border-[#8f8f8f] leading-[24px]">Mailbox<span class="text-[#d01c1c] text-[14px] font-bold ml-[3px] relative top-[3px]">11</span></div>
        <div class="w-[99px] h-[24px] mt-[3px] pl-[14px] border-r border-[#8f8f8f] leading-[24px]">Calendar</div>
        <div class="w-[107px] h-[24px] mt-[3px] pl-[14px] border-r border-[#8f8f8f] leading-[24px]">Company</div>
        <div class="w-[75px] h-[24px] mt-[3px] pl-[15px] border-r border-[#8f8f8f] leading-[24px]">Alerts</div>
        <div class="w-[87px] h-[24px] mt-[3px] pl-[15px] border-r border-[#8f8f8f] leading-[24px]">Articles</div>
        <div class="w-[113px] h-[24px] mt-[3px] pl-[15px] border-r border-[#8f8f8f] leading-[24px]">Code Base</div>
        <div class="w-[87px] h-[24px] mt-[3px] pl-[14px] border-r border-[#8f8f8f] leading-[24px]">Experts</div>
        <div class="w-[80px] h-[24px] mt-[3px] pl-[15px] leading-[24px]">Journal</div>
        <div class="ml-auto h-[30px] flex items-center text-[#1a1a1a] pr-[11px]">
          <svg class="w-[18px] h-[26px] mr-[8px]" viewBox="0 0 18 26"><path d="M2 8H16L17 25H1Z" fill="#f6c514" stroke="#d8a40a"/><path d="M6 10V4Q6 1 9 1T12 4V10" fill="none" stroke="#b98d0c" stroke-width="1.3"/></svg>Market
          <svg class="w-[24px] h-[18px] ml-[15px] mr-[5px]" viewBox="0 0 24 18" fill="none" stroke="#2a76ad" stroke-width="1.4"><circle cx="12" cy="9" r="2.5"/><path d="M7 3Q4 9 7 15M17 3Q20 9 17 15M3 1Q-1 9 3 17M21 1Q25 9 21 17"/></svg>Signals
          <svg class="w-[24px] h-[28px] ml-[15px] mr-[5px]" viewBox="0 0 24 28" fill="none" stroke="#1f6391" stroke-width="1.4"><path d="M6 16Q1 16 2 10T8 6Q10 1 15 2T19 7Q23 8 22 13T18 16Z" fill="#b8dcf5"/><path d="M12 16V23M1 23H23"/><circle cx="12" cy="23" r="2"/></svg>VPS
          <svg class="w-[22px] h-[26px] ml-[16px] mr-[7px]" viewBox="0 0 22 26"><rect x="3" y="4" width="16" height="18" rx="2" fill="#8fd0f5" stroke="#1f6391" stroke-width="1.4"/><path d="M7 1V4M11 1V4M15 1V4M7 22V25M11 22V25M15 22V25" stroke="#1f6391" stroke-width="1.4"/></svg>Tester
        </div>
      </div>
    </div>
  </div>
</div>

<!-- status bar -->
<div class="h-[33px] shrink-0 flex items-center bg-[#f0f0f0] border-t-2 border-[#bdbdbd]">
  <div class="w-[1499px] pl-[2px]">For Help, press F1</div>
  <div class="w-[196px] h-full border-l border-[#a5a5a5] pl-[6px] flex items-center">Default</div>
  <div class="w-[155px] h-full border-l border-[#a5a5a5] pl-[5px] flex items-center">2026.05.26 09:30</div>
  <div class="w-[110px] h-full border-l border-[#a5a5a5] pl-[6px] flex items-center">O: 4530.44</div>
  <div class="w-[109px] h-full border-l border-[#a5a5a5] pl-[6px] flex items-center">H: 4534.04</div>
  <div class="w-[104px] h-full border-l border-[#a5a5a5] pl-[6px] flex items-center">L: 4528.48</div>
  <div class="w-[107px] h-full border-l border-[#a5a5a5] pl-[6px] flex items-center">C: 4531.09</div>
  <div class="w-[103px] h-full border-l border-[#a5a5a5]"></div>
  <div class="flex-1 h-full border-l border-[#a5a5a5] pl-[7px] flex items-center gap-[8px]"><svg class="w-[22px] h-[22px]" viewBox="0 0 22 22" stroke="#2ca02c" stroke-width="2"><path d="M2 21V17M7 21V12M12 21V7M17 21V2"/></svg>957 / 1 Mb</div>
</div>

<!-- taskbar -->
<div class="h-[60px] shrink-0 flex items-center bg-[#04151f] text-white relative">
  <div class="w-[73px] flex justify-center"><svg class="w-[24px] h-[24px]" viewBox="0 0 24 24" fill="#fff"><path d="M0 3.5L10 2V11.5H0ZM11 1.8L24 0V11.5H11ZM0 12.5H10V22L0 20.5ZM11 12.5H24V24L11 22.2Z"/></svg></div>
  <div class="w-[515px] h-[60px] bg-[#f1f1f1] border-y-[2px] border-[#bdbdbd] flex items-center text-[#222] text-[22.5px]">
    <svg class="w-[26px] h-[30px] ml-[16px] mr-[17px]" viewBox="0 0 26 30" fill="none" stroke="#222" stroke-width="1.7"><circle cx="16" cy="11" r="9"/><path d="M10 18L2 28"/></svg>Type here to search
  </div>
  <div class="w-[74px] flex justify-center"><svg class="w-[28px] h-[36px]" viewBox="0 0 28 36" fill="none" stroke="#e8e8e8" stroke-width="1.4"><rect x="6" y="10" width="15" height="16"/><path d="M0 4H26M0 32H26M24 10V26"/></svg></div>
  <div class="w-[78px] flex justify-center"><svg class="w-[36px] h-[36px]" viewBox="0 0 36 36"><defs><linearGradient id="e1" x1="0" y1="0" x2="1" y2="1"><stop offset="0" stop-color="#2fd6a0"/><stop offset="0.5" stop-color="#1aa0e0"/><stop offset="1" stop-color="#0a4f9f"/></linearGradient></defs><circle cx="18" cy="18" r="17" fill="url(#e1)"/><path d="M34 20Q30 10 18 11Q9 13 10 22Q13 32 26 30Q20 27 21 22Q24 19 34 20Z" fill="#0b3f7a"/></svg></div>
  <div class="w-[72px] flex justify-center"><svg class="w-[34px] h-[36px]" viewBox="0 0 34 36"><path d="M1 3H14L17 7H33V35H1Z" fill="#f6c945"/><rect x="1" y="12" width="32" height="24" fill="#fbdc74"/><rect x="9" y="22" width="16" height="14" fill="#4b8fd1"/></svg></div>
  <div class="w-[74px] flex justify-center"><svg class="w-[36px] h-[36px]" viewBox="0 0 36 36"><circle cx="18" cy="18" r="17" fill="#34a853"/><path d="M18 1A17 17 0 0 1 33 10H18A8 8 0 0 0 10 14L4 8A17 17 0 0 1 18 1Z" fill="#e33b2e"/><path d="M33 10A17 17 0 0 1 18 35L25 23A8 8 0 0 0 26 14Z" fill="#fbbc05"/><circle cx="18" cy="18" r="8" fill="#fff"/><circle cx="18" cy="18" r="6" fill="#4285f4"/></svg></div>
  <div class="w-[74px] h-[60px] bg-[#2a3d49] border-b-[3px] border-[#8ab9df] flex items-center justify-center"><div class="w-[36px] h-[36px] bg-black flex flex-col items-center justify-center"><span class="text-[#3cd24a] text-[19px] font-bold leading-[20px]">IC</span><span class="text-white text-[9px] leading-[10px]">Trading</span></div></div>
  <div class="w-[5px]"></div>
  <div class="w-[65px] h-[60px] border-b-[3px] border-[#8ab9df] flex items-center justify-center"><svg class="w-[22px] h-[36px]" viewBox="0 0 22 36"><path d="M3 2L7 6H15L19 2V22Q19 34 11 34T3 22Z" fill="#e8e8e8"/><circle cx="7.500" cy="12" r="3" fill="#222"/><circle cx="14.500" cy="12" r="3" fill="#222"/><path d="M6 21H16M6 25H16M7 29H15" stroke="#444" stroke-width="1.5"/></svg></div>
  <div class="w-[12px]"></div>
  <div class="w-[63px] h-[60px] border-b-[3px] border-[#8ab9df] flex items-center justify-center"><svg class="w-[38px] h-[38px]" viewBox="0 0 38 38"><circle cx="17" cy="17" r="16" fill="#3b3b3b" stroke="#ddd" stroke-width="1.5"/><path d="M17 3Q27 8 24 17Q15 12 17 3ZM5 24Q6 14 15 14Q15 24 5 24ZM27 26Q18 31 13 22Q23 19 27 26Z" fill="#e8e8e8"/><circle cx="26" cy="28" r="9" fill="#f01313"/></svg></div>
  <div class="w-[7px]"></div>
  <div class="w-[73px] h-[60px] bg-[#1f3340] border-b-[3px] border-[#8ab9df] flex items-center justify-center"><div class="w-[36px] h-[36px] bg-black flex items-center justify-center"><svg class="w-[14px] h-[26px]" viewBox="0 0 14 26" fill="#fff"><path d="M12 1L3 9L8 13L2 25L12 15L7 11Z"/></svg></div></div>
  <div class="flex-1"></div>
  <svg class="w-[14px] h-[10px] mr-[17px]" viewBox="0 0 14 10" fill="none" stroke="#ddd" stroke-width="1.3"><path d="M1 9L7 1L13 9"/></svg>
  <svg class="w-[30px] h-[34px] mr-[6px]" viewBox="0 0 30 34"><path d="M3 6L22 1V29L3 28Z" fill="#26343d" stroke="#e8e8e8" stroke-width="1.3"/><circle cx="22" cy="26" r="6.500" fill="#f01313"/></svg>
  <svg class="w-[26px] h-[30px] mr-[16px]" viewBox="0 0 26 30" fill="none" stroke="#e8e8e8" stroke-width="1.4"><rect x="1" y="2" width="24" height="20"/><path d="M8 2V14H1M13 22V28M7 28H19"/></svg>
  <div class="mr-[16px] text-[18px] text-[#e8e8e8]">DEU</div>
  <div class="w-[88px] flex flex-col items-center text-[18px] leading-[28px] text-[#e8e8e8]"><span>3:34 PM</span><span>5/29/2026</span></div>
  <div class="relative w-[30px] h-[44px] ml-[25px] mr-[34px]">
    <svg class="absolute left-[4px] top-[2px] w-[24px] h-[34px]" viewBox="0 0 24 34" fill="#f5f5f5"><path d="M1 1H23V28H1Z"/><path d="M5 9H19M5 15H19M5 21H13" stroke="#222" stroke-width="1.3"/></svg>
    <div class="absolute left-[10px] top-[20px] w-[24px] h-[30px] rounded-full bg-[#444b50] flex items-center justify-center text-[17px] font-bold">4</div>
  </div>
</div>

</div>
</body>
</html>
